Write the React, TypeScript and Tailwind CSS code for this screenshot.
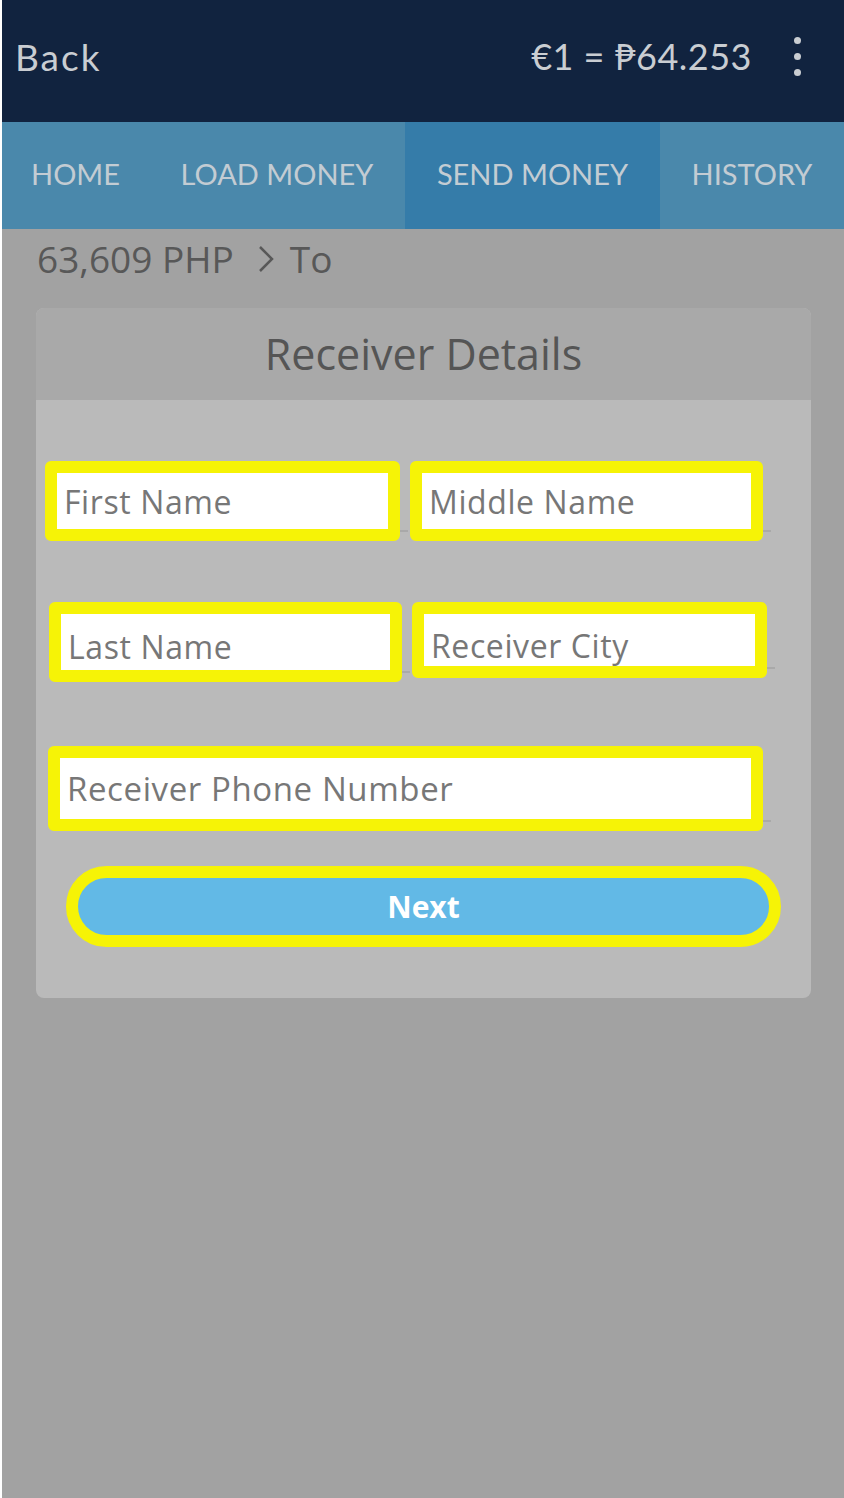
import { useState } from "react";

const tabs = ["HOME", "LOAD MONEY", "SEND MONEY", "HISTORY"];

function Field({
  placeholder,
  className,
  textClass = "",
}: {
  placeholder: string;
  className: string;
  textClass?: string;
}) {
  return (
    <div className={`relative ${className}`}>
      <div className="h-full rounded-md border-[12px] border-[#f6f306] bg-white flex">
        <input
          placeholder={placeholder}
          className={`w-full h-full bg-white pl-[7px] text-[32px] tracking-[0.6px] text-[#555] placeholder:text-[#777] outline-none ${textClass}`}
          style={{ fontFamily: "'Open Sans', sans-serif" }}
        />
      </div>
      {/* faint underline poking out past the highlight */}
      <div className="absolute right-[-8px] bottom-[9px] w-[8px] h-[2px] bg-[#a9a9a9]"></div>
    </div>
  );
}

function App() {
  const [active] = useState(2);

  return (
    <div
      className="w-[844px] h-[1498px] flex flex-col bg-[#a2a2a2] border-l-2 border-white overflow-hidden"
      style={{ fontFamily: "Lato, 'Open Sans', sans-serif" }}
    >
      {/* top bar */}
      <div className="h-[122px] bg-[#11233f] flex items-center justify-between pl-[13px] pr-[43px]">
        <span className="text-[37px] tracking-[2px] text-[#c9cdd2] -mt-[8px]">Back</span>
        <div className="flex items-center gap-[42px] -mt-[10px]">
          <span className="text-[36px] tracking-[0.5px] text-[#c9cdd2]">€1 = ₱64.253</span>
          <div className="flex flex-col gap-[9px]">
            <span className="w-[7px] h-[7px] rounded-full bg-[#c9cdd2]"></span>
            <span className="w-[7px] h-[7px] rounded-full bg-[#c9cdd2]"></span>
            <span className="w-[7px] h-[7px] rounded-full bg-[#c9cdd2]"></span>
          </div>
        </div>
      </div>

      {/* tabs */}
      <div className="h-[107px] bg-[#4a88ab] flex">
        {tabs.map((tab, i) => (
          <div
            key={tab}
            className={`flex items-center justify-center pb-[4px] text-[29px] text-[#c3ccd3] ${
              i === 0
                ? "w-[147px]"
                : i === 1
                ? "w-[256px]"
                : i === active
                ? "w-[255px] bg-[#357ca9]"
                : "flex-1"
            }`}
          >
            {tab}
          </div>
        ))}
      </div>

      {/* balance breadcrumb */}
      <div
        className="h-[60px] flex items-center pl-[35px] text-[37px] text-[#585858]"
        style={{ fontFamily: "'Open Sans', sans-serif" }}
      >
        <span>63,609 PHP</span>
        <svg className="ml-[24px] mr-[16px]" width="16" height="28" viewBox="0 0 16 28" fill="none">
          <path d="M2 2 L14 14 L2 26" stroke="#585858" strokeWidth="2.5" />
        </svg>
        <span>To</span>
      </div>

      {/* receiver card */}
      <div className="mt-[19px] ml-[34px] w-[775px] h-[690px] rounded-lg bg-[#bababa] overflow-hidden flex flex-col">
        <div
          className="h-[92px] bg-[#a9a9a9] flex items-center justify-center text-[43px] text-[#555]"
          style={{ fontFamily: "'Open Sans', sans-serif" }}
        >
          Receiver Details
        </div>

        <div className="flex mt-[61px] ml-[9px] gap-[10px]">
          <Field placeholder="First Name" className="w-[355px] h-[80px]" />
          <Field placeholder="Middle Name" className="w-[353px] h-[80px]" />
        </div>

        <div className="flex mt-[61px] ml-[13px] gap-[10px]">
          <Field placeholder="Last Name" className="w-[353px] h-[80px]" textClass="pt-[8px]" />
          <Field placeholder="Receiver City" className="w-[355px] h-[76px]" textClass="pt-[10px]" />
        </div>

        <Field
          placeholder="Receiver Phone Number"
          className="mt-[64px] ml-[12px] w-[715px] h-[85px]"
          textClass="text-[33px]"
        />

        <div className="mt-[35px] ml-[30px] w-[715px] h-[81px] rounded-full border-[12px] border-[#f6f306] bg-[#62b9e6] flex items-center justify-center">
          <span
            className="text-[30px] font-bold text-white"
            style={{ fontFamily: "'Open Sans', sans-serif" }}
          >
            Next
          </span>
        </div>
      </div>
    </div>
  );
}

export default App;
